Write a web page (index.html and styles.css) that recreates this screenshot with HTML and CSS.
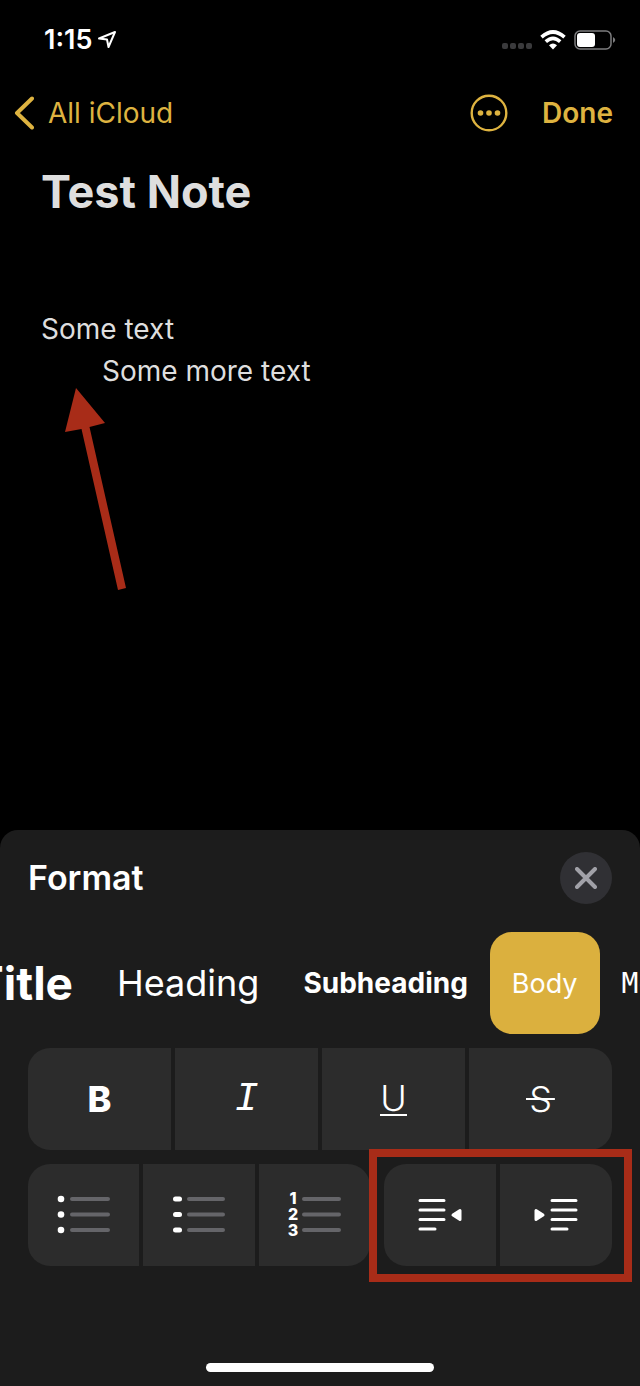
FILE: index.html
```html
<!DOCTYPE html>
<html lang="en">
<head>
    <meta charset="UTF-8">
    <meta name="viewport" content="width=device-width, initial-scale=1.0">
    <title>Test Note</title>
    <link rel="stylesheet" href="styles.css">
</head>
<body>

    <div class="status-bar">
        <div class="status-left">
            <span class="time">1:15</span>
            <svg class="location" width="20" height="20" viewBox="0 0 20 20" aria-hidden="true">
                <path d="M2 8.500 L18 2 L11.500 17 L10 9.500 Z"/>
            </svg>
        </div>
        <div class="status-right">
            <svg width="30" height="18" viewBox="0 0 30 18" aria-hidden="true">
                <g fill="#3a3a3c">
                    <rect x="0" y="12" width="6" height="6" rx="2"/>
                    <rect x="8" y="12" width="6" height="6" rx="2"/>
                    <rect x="16" y="12" width="6" height="6" rx="2"/>
                    <rect x="24" y="12" width="6" height="6" rx="2"/>
                </g>
            </svg>
            <svg width="26" height="20" viewBox="0 0 26 20" aria-hidden="true">
                <g fill="none" stroke="#fff" stroke-width="3.600">
                    <path d="M1.500 7.200 Q13 -3.200 24.500 7.200"/>
                    <path d="M5.800 11.700 Q13 5.200 20.200 11.700"/>
                </g>
                <path fill="#fff" d="M9 15.200 Q13 12 17 15.200 L13 19.500 Z"/>
            </svg>
            <svg width="42" height="20" viewBox="0 0 42 20" aria-hidden="true">
                <rect x="1" y="1" width="36" height="18" rx="5" fill="none" stroke="#7c7c7e" stroke-width="1.500"/>
                <rect x="3" y="3" width="18" height="14" rx="3" fill="#fff"/>
                <path fill="#7c7c7e" d="M39 7 Q43.500 10 39 13 Z"/>
            </svg>
        </div>
    </div>

    <nav class="nav">
        <a class="back" href="#">
            <svg width="20" height="34" viewBox="0 0 20 34" aria-hidden="true">
                <path d="M18 2.500 L3 17 L18 31.500"/>
            </svg>
            All iCloud
        </a>
        <button class="more" aria-label="More">
            <svg width="38" height="38" viewBox="0 0 38 38" aria-hidden="true">
                <circle cx="19" cy="19" r="17.300" fill="none" stroke="#deb340" stroke-width="2.400"/>
                <g fill="#deb340">
                    <circle cx="10.500" cy="19" r="2.800"/>
                    <circle cx="19" cy="19" r="2.800"/>
                    <circle cx="27.500" cy="19" r="2.800"/>
                </g>
            </svg>
        </button>
        <button class="done">Done</button>
    </nav>

    <main class="note">
        <h1>Test Note</h1>
        <p>Some text</p>
        <p class="indented">Some more text</p>
        <svg class="arrow" width="64" height="204" viewBox="0 0 64 204" aria-hidden="true">
            <path fill="#a82c18" d="M13 0 L42 35 L26.500 39 L63 200 L55 202 L18.500 41 L2 44 Z"/>
        </svg>
    </main>

    <section class="format">
        <div class="format-head">
            <h2>Format</h2>
            <button class="close" aria-label="Close">
                <svg width="22" height="22" viewBox="0 0 22 22" aria-hidden="true">
                    <path d="M2 2 L20 20 M20 2 L2 20"/>
                </svg>
            </button>
        </div>

        <div class="text-styles">
            <button class="style-title">Title</button>
            <button class="style-heading">Heading</button>
            <button class="style-subheading">Subheading</button>
            <button class="style-body selected">Body</button>
            <button class="style-mono">Monostyled</button>
        </div>

        <div class="group four">
            <button class="bold" aria-label="Bold">B</button>
            <button class="italic" aria-label="Italic">I</button>
            <button class="underline" aria-label="Underline"><span>U</span></button>
            <button class="strike" aria-label="Strikethrough"><span>S</span></button>
        </div>

        <div class="list-row">
            <div class="group three">
                <button aria-label="Bulleted list">
                    <svg width="54" height="48" viewBox="0 0 54 48" aria-hidden="true">
                        <g fill="#fff">
                            <circle cx="4" cy="8" r="3.300"/>
                            <circle cx="4" cy="23.500" r="3.300"/>
                            <circle cx="4" cy="39" r="3.300"/>
                        </g>
                        <path class="bars" d="M15 8 H51 M15 23.500 H51 M15 39 H51"/>
                    </svg>
                </button>
                <button aria-label="Dashed list">
                    <svg width="54" height="48" viewBox="0 0 54 48" aria-hidden="true">
                        <g fill="#fff">
                            <rect x="1" y="5.500" width="9" height="5" rx="2.500"/>
                            <rect x="1" y="21" width="9" height="5" rx="2.500"/>
                            <rect x="1" y="36.500" width="9" height="5" rx="2.500"/>
                        </g>
                        <path class="bars" d="M17 8 H51 M17 23.500 H51 M17 39 H51"/>
                    </svg>
                </button>
                <button aria-label="Numbered list">
                    <svg width="54" height="56" viewBox="0 -4 54 56" aria-hidden="true">
                        <g class="numbers">
                            <text x="6" y="13">1</text>
                            <text x="6" y="29">2</text>
                            <text x="6" y="45">3</text>
                        </g>
                        <path class="bars" d="M17 8 H52 M17 23.500 H52 M17 39 H52"/>
                    </svg>
                </button>
            </div>
            <div class="group two">
                <button aria-label="Decrease indent">
                    <svg width="44" height="34" viewBox="0 0 44 34" aria-hidden="true">
                        <path class="lines" d="M2 2.500 H26 M2 12 H26 M2 21.500 H26 M2 31 H17"/>
                        <path class="pointer" d="M35 17 L42 12.500 V21.500 Z"/>
                    </svg>
                </button>
                <button aria-label="Increase indent">
                    <svg width="44" height="34" viewBox="0 0 44 34" aria-hidden="true">
                        <path class="lines" d="M18 2.500 H42 M18 12 H42 M18 21.500 H42 M18 31 H33"/>
                        <path class="pointer" d="M9 17 L2 12.500 V21.500 Z"/>
                    </svg>
                </button>
                <span class="highlight"></span>
            </div>
        </div>

        <div class="home-bar"></div>
    </section>

</body>
</html>
```
FILE: styles.css
```css
* {
    box-sizing: border-box;
}
body {
    margin: 0;
    min-height: 100vh;
    display: flex;
    flex-direction: column;
    background: #000;
    color: #fff;
    font-family: Inter, "Liberation Sans", sans-serif;
    font-size: 28px;
}
button {
    padding: 0;
    border: none;
    background: none;
    color: inherit;
    font: inherit;
    cursor: pointer;
}
svg {
    display: block;
}
h1, h2, p {
    margin: 0;
}

/* Status bar */
.status-bar {
    display: flex;
    justify-content: space-between;
    align-items: center;
    height: 80px;
    padding: 0 24px 0 44px;
}
.status-left {
    display: flex;
    align-items: center;
    gap: 5px;
}
.time {
    font-size: 27px;
    line-height: 32px;
    font-weight: 600;
}
.location path {
    fill: none;
    stroke: #fff;
    stroke-width: 2;
    stroke-linejoin: round;
}
.status-right {
    display: flex;
    align-items: center;
    gap: 8px;
}

/* Navigation */
.nav {
    display: flex;
    align-items: center;
    height: 66px;
    padding: 0 27px 0 14px;
    color: #deb340;
}
.back {
    display: flex;
    align-items: center;
    gap: 14px;
    margin-right: auto;
    color: inherit;
    text-decoration: none;
}
.back path {
    fill: none;
    stroke: #deb340;
    stroke-width: 4;
    stroke-linecap: round;
    stroke-linejoin: round;
}
.done {
    margin-left: 34px;
    font-weight: 600;
}

/* Note */
.note {
    position: relative;
    flex: 1;
    padding: 18px 41px;
    color: #dedede;
}
.note h1 {
    margin-bottom: 88px;
    font-size: 45px;
    line-height: 56px;
    font-weight: 700;
}
.note p {
    line-height: 42px;
}
.note .indented {
    padding-left: 61px;
}
.arrow {
    position: absolute;
    left: 63px;
    top: 242px;
}

/* Format panel */
.format {
    padding: 22px 28px 14px;
    border-radius: 18px 18px 0 0;
    background: #1c1c1c;
}
.format-head {
    display: flex;
    justify-content: space-between;
    align-items: center;
}
.format-head h2 {
    font-size: 34px;
    line-height: 40px;
    font-weight: 600;
}
.close {
    display: grid;
    place-items: center;
    width: 52px;
    height: 52px;
    border-radius: 50%;
    background: #303034;
}
.close path {
    stroke: #a1a1a8;
    stroke-width: 4;
    stroke-linecap: round;
}
.text-styles {
    display: flex;
    height: 102px;
    margin: 28px -28px 14px;
    overflow: hidden;
}
.text-styles button {
    flex: none;
    padding: 0 22px;
    border-radius: 22px;
}
.text-styles .style-title {
    margin-left: -49px;
    font-size: 46px;
    font-weight: 700;
}
.text-styles .style-heading {
    font-size: 36px;
}
.text-styles .style-subheading {
    font-weight: 700;
}
.text-styles .style-body {
    font-size: 27px;
}
.text-styles .style-mono {
    font-family: "DejaVu Sans Mono", monospace;
}
.text-styles .selected {
    background: #dbb03e;
}
.group {
    display: grid;
    gap: 4px;
    height: 102px;
}
.four {
    grid-template-columns: repeat(4, 1fr);
}
.three {
    grid-template-columns: repeat(3, 1fr);
}
.two {
    position: relative;
    grid-template-columns: repeat(2, 1fr);
}
.group button {
    display: grid;
    place-items: center;
    background: #2c2c2c;
    font-size: 36px;
}
.group button:first-child {
    border-radius: 22px 0 0 22px;
}
.group button:last-of-type {
    border-radius: 0 22px 22px 0;
}
.group .bold {
    font-weight: 800;
}
.group .italic {
    font-family: "Liberation Mono", monospace;
    font-size: 40px;
    font-style: italic;
}
.group .underline,
.group .strike {
    font-weight: 300;
}
.underline span {
    line-height: 32px;
    border-bottom: 2px solid #fff;
}
/* the line runs a little past the letter on both sides */
.strike span {
    padding: 0 3px;
    background: linear-gradient(#fff, #fff) center / 100% 2px no-repeat;
}
.list-row {
    display: grid;
    grid-template-columns: 3fr 2fr;
    gap: 14px;
    margin-top: 14px;
}
.bars {
    stroke: #656569;
    stroke-width: 4;
    stroke-linecap: round;
}
.numbers {
    fill: #fff;
    font-size: 16px;
    font-weight: 800;
    text-anchor: middle;
}
.lines {
    stroke: #fff;
    stroke-width: 3;
    stroke-linecap: round;
}
.pointer {
    fill: #fff;
    stroke: #fff;
    stroke-width: 3;
    stroke-linejoin: round;
}
.highlight {
    position: absolute;
    inset: -15px -20px -16px -15px;
    border: 8px solid #a82c18;
    pointer-events: none;
}
.home-bar {
    width: 39%;
    height: 9px;
    margin: 97px auto 0;
    border-radius: 5px;
    background: #fff;
}
```
